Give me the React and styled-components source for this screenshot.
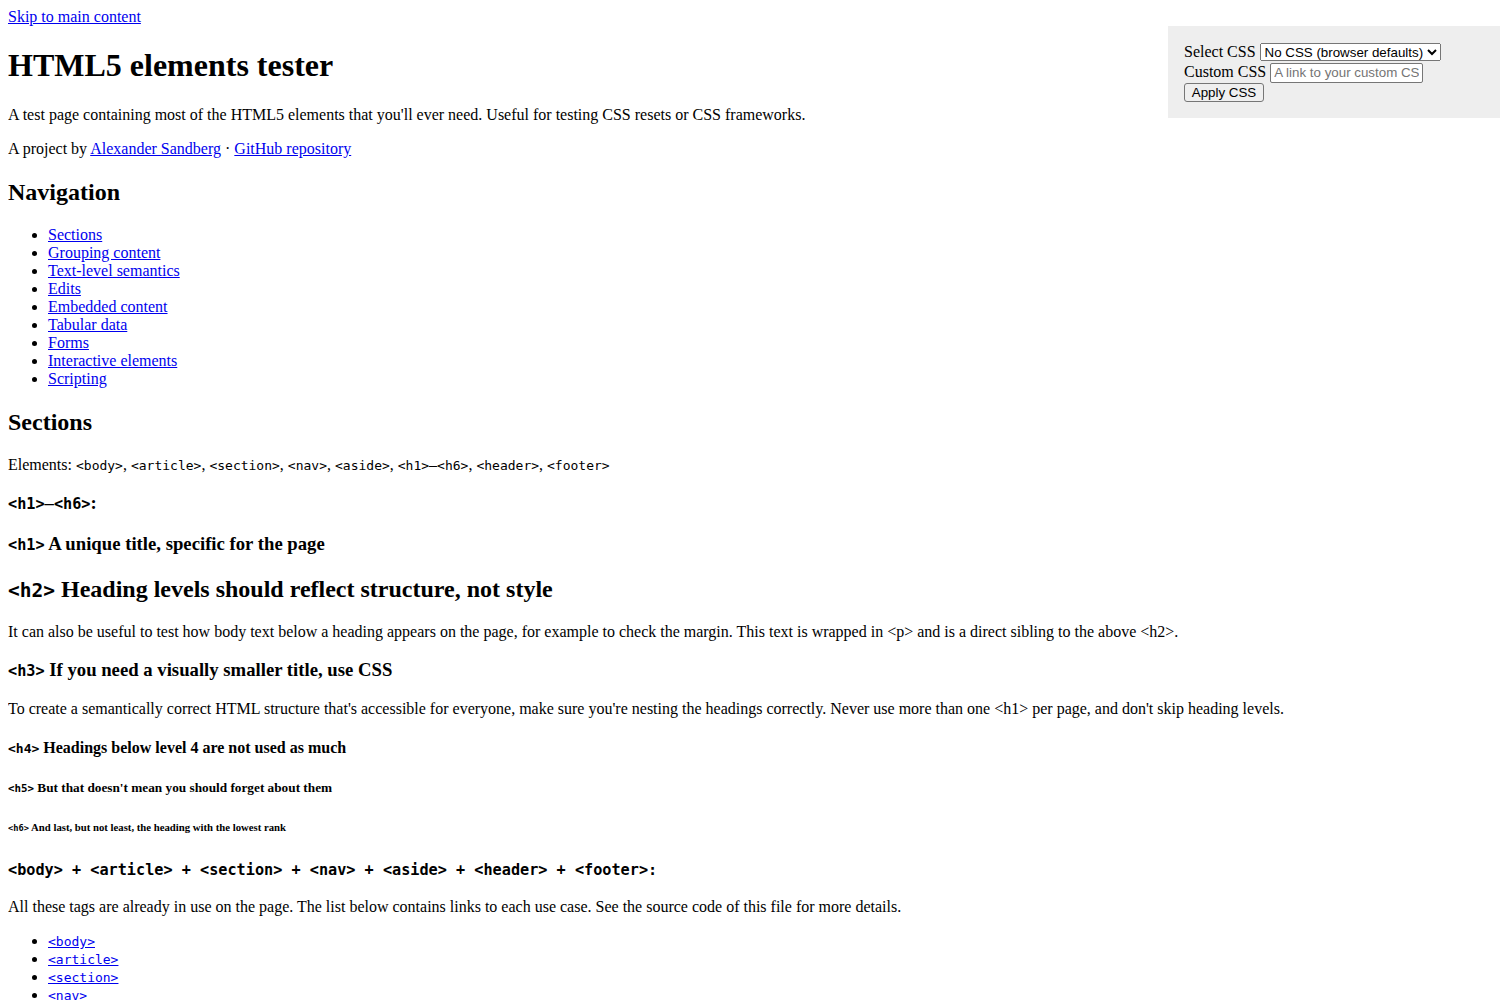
import React from "react";
import styled, { createGlobalStyle } from "styled-components";

const Global = createGlobalStyle`
  html { background: #fff; }
  body {
    margin: 8px;
    font-family: "Liberation Serif", "Times New Roman", serif;
    font-size: 16px;
    color: #000;
  }
`;

const sizes = {
  1: ["2em", "0.67em", "normal"],
  2: ["1.5em", "0.83em", "28px"],
  3: ["1.17em", "1em", "22px"],
  4: ["1em", "1.33em", "normal"],
  5: ["0.83em", "1.67em", "normal"],
  6: ["0.67em", "2.33em", "normal"],
};

const Heading = styled.h2`
  display: block;
  font-weight: bold;
  font-size: ${(p) => sizes[p.$size][0]};
  margin: ${(p) => sizes[p.$size][1]} 0;
  line-height: ${(p) => sizes[p.$size][2]};
`;

const Link = styled.a`
  color: #0000ee;
  text-decoration: underline;
`;

const Para = styled.p`
  margin: 1em 0;
`;

const Code = styled.code`
  font-family: "DejaVu Sans Mono", monospace;
  font-size: 0.8125em;
  line-height: normal;
`;

const List = styled.ul`
  margin: 1em 0;
  padding-left: 40px;
  list-style: disc;
`;

const Item = styled.li`
  display: list-item;
`;

const Section = styled.section`
  display: block;
`;

const Article = styled.article`
  display: block;
`;

const Panel = styled.aside`
  position: absolute;
  top: 26px;
  right: 0;
  width: 300px;
  padding: 16px;
  background: #eeeeee;
`;

const Form = styled.form`
  display: flex;
  flex-direction: column;
  align-items: flex-start;
`;

const Field = styled.label`
  display: block;
  line-height: 20px;
  height: 20px;
`;

const Select = styled.select`
  font-family: "Liberation Sans", Arial, sans-serif;
  font-size: 13.333px;
  width: 181px;
  height: 18px;
  margin: 0;
  vertical-align: baseline;
`;

const Input = styled.input`
  font-family: "Liberation Sans", Arial, sans-serif;
  font-size: 13.333px;
  width: 153px;
  height: 20px;
  box-sizing: border-box;
  margin: 0;
  padding: 1px 3px;
  border: 1px solid #767676;
  border-radius: 2px;
  &::placeholder { color: #757575; }
`;

const Button = styled.button`
  font-family: "Liberation Sans", Arial, sans-serif;
  font-size: 13.333px;
  width: 80px;
  height: 19px;
  margin: 1px 0 0;
  padding: 0 6px;
  background: #efefef;
  border: 1px solid #767676;
  border-radius: 3px;
  color: #000;
`;

const navItems = [
  "Sections",
  "Grouping content",
  "Text-level semantics",
  "Edits",
  "Embedded content",
  "Tabular data",
  "Forms",
  "Interactive elements",
  "Scripting",
];

const sectionTags = ["body", "article", "section", "nav", "aside", "header", "footer"];

const t = (s) => `<${s}>`;

export default function App() {
  return (
    <>
      <Global />
      <Link href="#main">Skip to main content</Link>
      <header>
        <Heading as="h1" $size={1}>HTML5 elements tester</Heading>
        <Para>
          A test page containing most of the HTML5 elements that you'll ever need. Useful for
          testing CSS resets or CSS frameworks.
        </Para>
        <Para>
          A project by <Link href="#">Alexander Sandberg</Link> · <Link href="#">GitHub repository</Link>
        </Para>
      </header>
      <Panel>
        <Form onSubmit={(e) => e.preventDefault()}>
          <Field>
            Select CSS{" "}
            <Select defaultValue="none">
              <option value="none">No CSS (browser defaults)</option>
            </Select>
          </Field>
          <Field>
            Custom CSS <Input type="text" placeholder="A link to your custom CSS" />
          </Field>
          <Button type="submit">Apply CSS</Button>
        </Form>
      </Panel>
      <nav>
        <Heading $size={2}>Navigation</Heading>
        <List>
          {navItems.map((n) => (
            <Item key={n}>
              <Link href="#">{n}</Link>
            </Item>
          ))}
        </List>
      </nav>
      <main id="main">
        <Section>
          <Heading $size={2}>Sections</Heading>
          <Para>
            Elements:{" "}
            {["body", "article", "section", "nav", "aside"].map((s) => (
              <React.Fragment key={s}>
                <Code>{t(s)}</Code>,{" "}
              </React.Fragment>
            ))}
            <Code>{t("h1")}</Code>–<Code>{t("h6")}</Code>, <Code>{t("header")}</Code>,{" "}
            <Code>{t("footer")}</Code>
          </Para>
          <Article>
            <Heading as="h3" $size={3}>
              <Code>{t("h1")}</Code>–<Code>{t("h6")}</Code>:
            </Heading>
            <Heading as="h1" $size={3}>
              <Code>{t("h1")}</Code> A unique title, specific for the page
            </Heading>
            <Heading $size={2}>
              <Code>{t("h2")}</Code> Heading levels should reflect structure, not style
            </Heading>
            <Para>
              It can also be useful to test how body text below a heading appears on the page, for
              example to check the margin. This text is wrapped in {t("p")} and is a direct sibling
              to the above {t("h2")}.
            </Para>
            <Heading as="h3" $size={3}>
              <Code>{t("h3")}</Code> If you need a visually smaller title, use CSS
            </Heading>
            <Para>
              To create a semantically correct HTML structure that's accessible for everyone, make
              sure you're nesting the headings correctly. Never use more than one {t("h1")} per
              page, and don't skip heading levels.
            </Para>
            <Heading as="h4" $size={4}>
              <Code>{t("h4")}</Code> Headings below level 4 are not used as much
            </Heading>
            <Heading as="h5" $size={5}>
              <Code>{t("h5")}</Code> But that doesn't mean you should forget about them
            </Heading>
            <Heading as="h6" $size={6}>
              <Code>{t("h6")}</Code> And last, but not least, the heading with the lowest rank
            </Heading>
          </Article>
          <Article>
            <Heading as="h3" $size={3}>
              <Code>{sectionTags.map(t).join(" + ")}:</Code>
            </Heading>
            <Para>
              All these tags are already in use on the page. The list below contains links to each
              use case. See the source code of this file for more details.
            </Para>
            <List>
              {sectionTags.map((s) => (
                <Item key={s}>
                  <Link href="#">
                    <Code>{t(s)}</Code>
                  </Link>
                </Item>
              ))}
            </List>
          </Article>
        </Section>
      </main>
    </>
  );
}
